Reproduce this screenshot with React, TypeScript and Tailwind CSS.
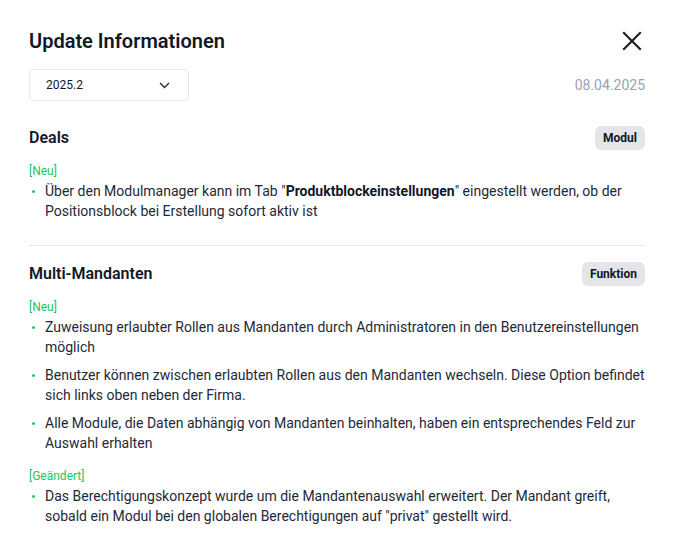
import React from "react";

type Entry = { label: string; items: React.ReactNode[] };

type Section = {
  title: string;
  tag: string;
  entries: Entry[];
};

const sections: Section[] = [
  {
    title: "Deals",
    tag: "Modul",
    entries: [
      {
        label: "[Neu]",
        items: [
          <>
            Über den Modulmanager kann im Tab "
            <span className="font-bold text-gray-900">Produktblockeinstellungen</span>"
            eingestellt werden, ob der Positionsblock bei Erstellung sofort aktiv ist
          </>,
        ],
      },
    ],
  },
  {
    title: "Multi-Mandanten",
    tag: "Funktion",
    entries: [
      {
        label: "[Neu]",
        items: [
          "Zuweisung erlaubter Rollen aus Mandanten durch Administratoren in den Benutzereinstellungen möglich",
          "Benutzer können zwischen erlaubten Rollen aus den Mandanten wechseln. Diese Option befindet sich links oben neben der Firma.",
          "Alle Module, die Daten abhängig von Mandanten beinhalten, haben ein entsprechendes Feld zur Auswahl erhalten",
        ],
      },
      {
        label: "[Geändert]",
        items: [
          'Das Berechtigungskonzept wurde um die Mandantenauswahl erweitert. Der Mandant greift, sobald ein Modul bei den globalen Berechtigungen auf "privat" gestellt wird.',
        ],
      },
    ],
  },
];

const CloseIcon = () => (
  <svg width="20" height="20" viewBox="0 0 20 20" fill="none" stroke="#1f2126" strokeWidth="2.2" strokeLinecap="square">
    <path d="M2 2L18 18M18 2L2 18" />
  </svg>
);

const Chevron = () => (
  <svg width="11" height="7" viewBox="0 0 11 7" fill="none" stroke="#1f2937" strokeWidth="1.3">
    <path d="M1 1L5.5 5.5L10 1" />
  </svg>
);

const UpdateSection = ({ section, last }: { section: Section; last: boolean }) => (
  <section className={last ? "pt-4" : "pb-6 border-b border-gray-200"}>
    <div className="flex flex-row items-center justify-between h-6">
      <h2 className="text-base font-semibold text-gray-900">{section.title}</h2>
      <span className="h-6 px-2 rounded-md bg-[#e4e5e8] text-xs font-bold text-gray-900 flex items-center">
        {section.tag}
      </span>
    </div>
    <div className="flex flex-col gap-[15px] mt-[13px]">
      {section.entries.map((entry) => (
        <div key={entry.label}>
          <div className="text-xs leading-4 text-[#22c55e]">{entry.label}</div>
          <ul className="mt-[2px] flex flex-col gap-2">
            {entry.items.map((item, i) => (
              <li key={i} className="flex flex-row text-sm leading-5 text-gray-800">
                <span className="w-4 shrink-0 flex pt-[9px] pl-[3px]">
                  <span className="w-[3px] h-[3px] rounded-full bg-[#22c55e]" />
                </span>
                <span>{item}</span>
              </li>
            ))}
          </ul>
        </div>
      ))}
    </div>
  </section>
);

export default function App() {
  return (
    <div className="w-[674px] h-[547px] bg-white rounded-lg font-['Roboto',sans-serif] px-[29px] pt-[27px]">
      <div className="flex flex-row items-center justify-between">
        <h1 className="text-xl leading-7 font-semibold text-gray-900">Update Informationen</h1>
        <button className="mr-[3px]">
          <CloseIcon />
        </button>
      </div>
      <div className="flex flex-row items-center justify-between mt-[14px]">
        <button className="w-[160px] h-8 border border-gray-200 rounded-[4px] flex flex-row items-center justify-between pl-4 pr-[18px] text-xs text-gray-900">
          <span>2025.2</span>
          <Chevron />
        </button>
        <span className="text-sm text-gray-400">08.04.2025</span>
      </div>
      <div className="mt-[25px]">
        {sections.map((s, i) => (
          <UpdateSection key={s.title} section={s} last={i === sections.length - 1} />
        ))}
      </div>
    </div>
  );
}
